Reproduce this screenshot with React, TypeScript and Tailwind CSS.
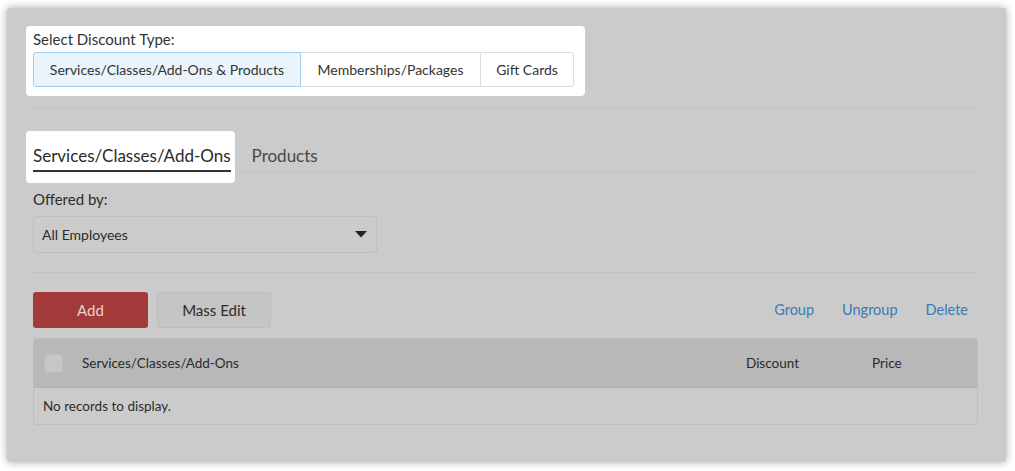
import React from 'react';

const font = { fontFamily: 'Lato, "Open Sans", sans-serif' };

const App: React.FC = () => {
  return (
    <div className="w-[1015px] h-[471px] bg-white pt-[8px] pl-[7px]" style={font}>
      {/* dimmed panel */}
      <div className="w-[999px] h-[454px] bg-[#cbcbcb] rounded-[3px] shadow-[0_0_8px_rgba(0,0,0,0.35)] px-[26px] pr-[28px] pt-[18px] text-[#2b2b2b]">
        {/* Discount type spotlight */}
        <div className="-ml-[7px] w-[559px] bg-white rounded-[4px] pl-[7px] pt-[3px] pb-[9px]">
          <div className="h-[20px] leading-[20px] text-[15px] text-[#333]">Select Discount Type:</div>
          <div className="mt-[3px] flex h-[35px] text-[14px] text-[#333]">
            <div className="w-[268px] flex items-center justify-center bg-[#e9f4fc] border border-[#a3cdee] rounded-l-[3px]">
              Services/Classes/Add-Ons &amp; Products
            </div>
            <div className="w-[180px] flex items-center justify-center border-y border-r border-[#dedede]">
              Memberships/Packages
            </div>
            <div className="w-[93px] flex items-center justify-center border-y border-r border-[#dedede] rounded-r-[3px]">
              Gift Cards
            </div>
          </div>
        </div>

        <div className="mt-[12px] border-t border-[#c2c2c2]"></div>

        {/* Tabs */}
        <div className="mt-[22px] flex items-end border-b border-[#c2c2c2]">
          <div className="relative -ml-[7px] bg-white rounded-[4px] px-[4px] pl-[7px] pt-[14px] pb-[11px] -mb-[11px]">
            <div className="text-[17px] leading-[22px] text-[#2b2b2b] border-b-2 border-[#333] pb-[3px]">
              Services/Classes/Add-Ons
            </div>
          </div>
          <div className="ml-[17px] text-[17px] leading-[22px] text-[#484848] pb-[5px]">Products</div>
        </div>

        {/* Offered by */}
        <div className="mt-[16px] h-[20px] leading-[20px] text-[15px]">Offered by:</div>
        <div className="mt-[7px] w-[344px] h-[37px] border border-[#bfbfbf] rounded-[3px] flex items-center justify-between pl-[8px] pr-[8px] text-[14px]">
          <span>All Employees</span>
          <svg width="12" height="7" viewBox="0 0 12 7" className="mr-[1px]">
            <path d="M0 0 L12 0 L6 6.5 Z" fill="#222" />
          </svg>
        </div>

        <div className="mt-[19px] border-t border-[#c2c2c2]"></div>

        {/* Actions */}
        <div className="mt-[19px] flex items-center h-[36px]">
          <button className="w-[115px] h-[36px] rounded-[3px] bg-[#a23a3a] text-[#e6d3d3] text-[15px]">Add</button>
          <button className="ml-[9px] w-[114px] h-[36px] rounded-[3px] bg-[#c5c5c5] border border-[#bebebe] text-[15px] text-[#2b2b2b]">
            Mass Edit
          </button>
          <div className="ml-auto mr-[10px] flex gap-[28px] text-[14.5px] text-[#3a7ab3]">
            <span>Group</span>
            <span>Ungroup</span>
            <span>Delete</span>
          </div>
        </div>

        {/* Table */}
        <div className="mt-[10px] border border-[#bcbcbc] rounded-[3px] overflow-hidden">
          <div className="h-[49px] bg-[#b8b8b8] flex items-center text-[13.5px] text-[#2b2b2b] border-b border-[#b0b0b0]">
            <div className="ml-[10px] w-[19px] h-[19px] rounded-[3px] bg-[#c6c6c6] border border-[#bdbdbd]"></div>
            <div className="ml-[19px]">Services/Classes/Add-Ons</div>
            <div className="ml-auto w-[126px]">Discount</div>
            <div className="w-[105px]">Price</div>
          </div>
          <div className="h-[36px] flex items-center pl-[9px] text-[13.5px] text-[#2b2b2b]">No records to display.</div>
        </div>
      </div>
    </div>
  );
};

export default App;
